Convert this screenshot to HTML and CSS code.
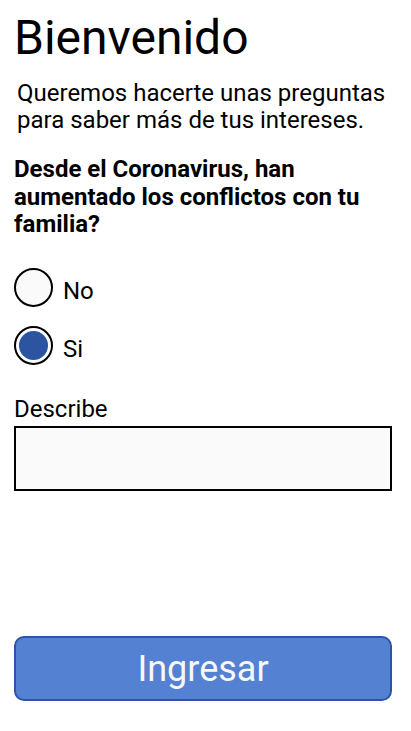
FILE: index.html
```html
<!DOCTYPE html>
<html lang="es">
<head>
<meta charset="utf-8">
<title>Bienvenido</title>
<link rel="stylesheet" href="styles.css">
</head>
<body>
<main class="page">
  <h1 class="title">Bienvenido</h1>
  <p class="intro">Queremos hacerte unas preguntas para saber más de tus intereses.</p>
  <p class="question">Desde el Coronavirus, han aumentado los conflictos con tu familia?</p>
  <div class="options">
    <div class="option"><span class="radio"></span><span class="option-label">No</span></div>
    <div class="option"><span class="radio checked"></span><span class="option-label">Si</span></div>
  </div>
  <label class="field-label">Describe</label>
  <div class="field"></div>
  <button class="submit">Ingresar</button>
</main>
</body>
</html>
```
FILE: styles.css
```css
* { box-sizing: border-box; }
html, body { margin: 0; padding: 0; background: #fff; }
body { font-family: Roboto, "Liberation Sans", sans-serif; color: #000; }
.page {
  display: flex;
  flex-direction: column;
  padding: 0 19px 0 14px;
  width: 411px;
}
.title {
  margin: 10px 0 0 0;
  font-size: 48px;
  font-weight: 400;
  line-height: 56px;
}
.intro {
  margin: 14px 0 0 3px;
  font-size: 24px;
  line-height: 27px;
}
.question {
  margin: 22px 0 0 0;
  font-size: 24px;
  font-weight: 700;
  line-height: 27.5px;
}
.options {
  display: flex;
  flex-direction: column;
  gap: 19px;
  margin-top: 29.5px;
}
.option {
  display: flex;
  align-items: center;
  gap: 10px;
  height: 39px;
}
.radio {
  width: 39px;
  height: 39px;
  border: 2px solid #000;
  border-radius: 50%;
  background: #fafafa;
  position: relative;
}
.radio.checked {
  background: #fff;
}
.radio.checked::after {
  content: "";
  position: absolute;
  inset: 3px;
  border-radius: 50%;
  background: #2c54a0;
}
.option-label {
  font-size: 24px;
  margin-top: 6px;
}
.field-label {
  margin-top: 29.5px;
  font-size: 24px;
  line-height: 28px;
}
.field {
  margin-top: 3.5px;
  height: 65px;
  border: 2px solid #000;
  background: #fafafa;
}
.submit {
  margin-top: 145px;
  height: 65px;
  border: 2px solid #2c55a6;
  border-radius: 10px;
  background: #5581d2;
  color: #f7f7f7;
  font-family: Roboto, "Liberation Sans", sans-serif;
  font-size: 36px;
  padding: 0;
}
```
